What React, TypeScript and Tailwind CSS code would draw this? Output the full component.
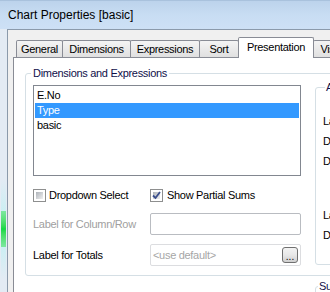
import React from 'react';

const tabs = [
  { label: 'General', w: 'w-[47px]' },
  { label: 'Dimensions', w: 'w-[69px]' },
  { label: 'Expressions', w: 'w-[70px]' },
  { label: 'Sort', w: 'w-[40px]' },
  { label: 'Presentation', w: 'w-[76px]', selected: true },
  { label: 'Visual Cues', w: 'w-[70px]' },
  { label: 'Style', w: 'w-[40px]' },
];

const Checkbox = ({ checked = false }: { checked?: boolean }) => (
  <div className="relative w-[13px] h-[13px] shrink-0 border border-[#8e8f8f] bg-white p-[2px]">
    <div className="w-full h-full bg-linear-to-br from-[#aeb3b9] to-[#f0f0f1]" />
    {checked && (
      <svg className="absolute left-0 top-0" width="11" height="11" viewBox="0 0 11 11">
        <path d="M2 5.5 L4.5 8 L9 2" fill="none" stroke="#3a4e8c" strokeWidth="1.8" />
      </svg>
    )}
  </div>
);

const App: React.FC = () => {
  return (
    <div className="w-[330px] h-[292px] overflow-hidden bg-[#e3ebf4] font-['Liberation_Sans',Arial,sans-serif] text-black">
      {/* title bar */}
      <div className="h-[29px] flex items-center pl-[8px] border-t border-[#a9c2dd] bg-linear-to-b from-[#bcd3ec] via-[#c8ddf3] to-[#cde0f5] text-[12px] whitespace-nowrap">
        Chart Properties [basic]
      </div>

      <div className="flex h-[263px]">
        {/* window frame, with some glow behind the glass */}
        <div className="w-[7px] shrink-0 flex flex-col">
          <div className="h-[150px]" />
          <div className="h-[100px] mx-px bg-linear-to-b from-transparent via-[#bff1f3] to-transparent flex flex-col justify-center">
            <div className="h-[36px] bg-linear-to-b from-[#7ce8a0] via-[#0fd844] to-[#7ce8a0]" />
          </div>
        </div>

        {/* client area */}
        <div className="flex-1 flex flex-col border-l border-t border-[#8b9aab] bg-[#f0f0f0] pt-[7px]">
          <div className="h-[20px] flex items-end pl-[8px] whitespace-nowrap text-[11px] tracking-[-0.3px]">
            {tabs.map((t) =>
              t.selected ? (
                <div
                  key={t.label}
                  className={`${t.w} shrink-0 h-[21px] -mb-px -ml-px relative z-10 flex justify-center pt-[2px] leading-[14px] border border-b-0 border-[#898c95] rounded-t-[2px] bg-white`}
                >
                  {t.label}
                </div>
              ) : (
                <div
                  key={t.label}
                  className={`${t.w} shrink-0 h-[17px] -ml-px first:ml-0 flex justify-center pt-px leading-[14px] border border-b-0 border-[#898c95] rounded-t-[2px] bg-linear-to-b from-[#f4f4f4] to-[#e0e0e0]`}
                >
                  {t.label}
                </div>
              )
            )}
          </div>

          {/* tab panel */}
          <div className="flex-1 ml-[5px] border-l border-t border-[#898c95] bg-white text-[11px] tracking-[-0.3px] whitespace-nowrap">
            <fieldset className="ml-[11px] mt-[8px] w-[420px] border border-[#d5dfe5] rounded-[3px]">
              <legend className="ml-[5px] px-[2px] leading-[14px] text-[#10104a]">Dimensions and Expressions</legend>
              <div className="flex items-start gap-[14px] pl-[7px] pb-[9px]">
                <div className="w-[268px] shrink-0 pt-[5px]">
                  <div className="h-[91px] border border-[#828790] bg-white pt-[2px] px-px">
                    <div className="h-[15px] leading-[15px] px-[2px]">E.No</div>
                    <div className="h-[15px] leading-[15px] px-[2px] bg-[#3399ff] text-white">Type</div>
                    <div className="h-[15px] leading-[15px] px-[2px]">basic</div>
                  </div>

                  <div className="mt-[13px] flex h-[13px] items-center">
                    <div className="w-[117px] flex items-center gap-[3px]">
                      <Checkbox />
                      <span>Dropdown Select</span>
                    </div>
                    <div className="flex items-center gap-[4px]">
                      <Checkbox checked />
                      <span>Show Partial Sums</span>
                    </div>
                  </div>

                  <div className="mt-[11px] flex items-center">
                    <div className="w-[117px] text-[#a0a0a0]">Label for Column/Row</div>
                    <div className="h-[22px] w-[151px] border border-[#b9bcc1] rounded-[2px] bg-white" />
                  </div>

                  <div className="mt-[9px] flex items-center">
                    <div className="w-[117px]">Label for Totals</div>
                    <div className="h-[22px] w-[151px] flex items-center justify-between pl-[2px] pr-[2px] border border-[#dcdde0] rounded-[2px] bg-white">
                      <span className="text-[#a6a6a6]">&lt;use default&gt;</span>
                      <div className="w-[16px] h-[16px] flex items-end justify-center border border-[#707070] rounded-[3px] bg-linear-to-b from-[#f3f3f3] via-[#e8e8e8] to-[#cfcfcf] text-[10px] leading-[11px] tracking-normal">
                        ...
                      </div>
                    </div>
                  </div>
                </div>

                <fieldset className="w-[110px] shrink-0 border border-[#d5dfe5] rounded-[3px] pl-[7px] pt-[17px] pb-[19px]">
                  <legend className="ml-[2px] px-px leading-[14px] text-[#10104a]">Alignment</legend>
                  <div className="h-[20px] flex items-center">Label</div>
                  <div className="h-[20px] flex items-center">Data (Numeric)</div>
                  <div className="h-[20px] flex items-center">Data (Text)</div>
                  <div className="h-[20px] flex items-center mt-[34px]">Label (Vertical)</div>
                  <div className="h-[20px] flex items-center">Data (Vertical)</div>
                </fieldset>
              </div>
            </fieldset>

            <div className="flex items-start ml-[19px] mt-[3px]">
              <div className="w-[282px] shrink-0 pt-[11px] flex items-center gap-[3px]">
                <Checkbox />
                <span>Allow Pivoting</span>
              </div>
              <fieldset className="w-[110px] shrink-0 h-[60px] border border-[#d5dfe5] rounded-[3px]">
                <legend className="ml-[2px] px-px leading-[14px] text-[#10104a]">Subtotals</legend>
              </fieldset>
            </div>
          </div>
        </div>
      </div>
    </div>
  );
};

export default App;
